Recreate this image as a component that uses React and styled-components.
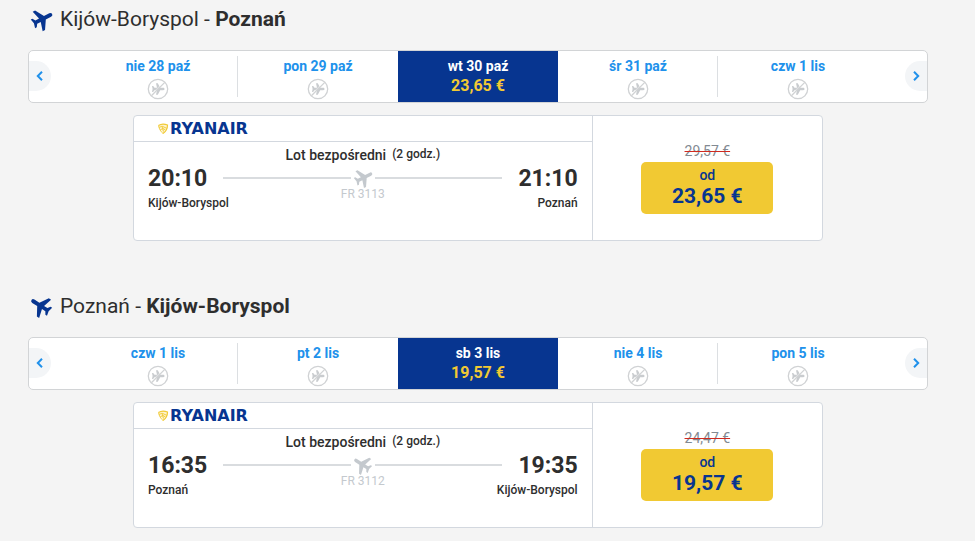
import React from 'react';
import styled, { createGlobalStyle } from 'styled-components';

const navy = '#073590';
const yellow = '#f1c933';
const sky = '#2091eb';
const ink = '#2e2e2e';
const line = '#d3d8df';
const silver = '#c4c9ce';

const GlobalStyle = createGlobalStyle`
  * { box-sizing: border-box; }
  body {
    margin: 0;
    background: #f4f4f4;
    color: ${ink};
    font-family: Roboto, "Liberation Sans", sans-serif;
  }
  button { font-family: inherit; cursor: pointer; }
`;

const Page = styled.main`
  max-width: 975px;
  padding: 4px 47px 13px 28px;
  display: flex;
  flex-direction: column;
  gap: 50px;
`;

const Trip = styled.section`
  display: flex;
  flex-direction: column;
`;

const Heading = styled.h2`
  display: flex;
  align-items: center;
  gap: 8px;
  margin: 0 0 16px;
  padding-left: 3px;
  font-size: 21px;
  line-height: 30px;
  font-weight: 400;
`;

const Strong = styled.strong`
  font-weight: 700;
`;

const Carousel = styled.nav`
  display: grid;
  grid-template-columns: 49px 1fr 49px;
  height: 53px;
  background: #fff;
  border: 1px solid #d2d4d6;
  border-radius: 5px;
`;

const Arrow = styled.button`
  display: flex;
  align-items: center;
  justify-content: center;
  width: 22px;
  height: 30px;
  margin-top: 10px;
  padding: 0;
  border: 0;
  background: #f3f5f7;
  color: ${sky};
  justify-self: ${(p) => (p.$next ? 'end' : 'start')};
  border-radius: ${(p) => (p.$next ? '15px 0 0 15px' : '0 15px 15px 0')};
`;

const Days = styled.div`
  display: grid;
  grid-template-columns: repeat(5, 1fr);
  height: 100%;
`;

const Day = styled.button`
  display: flex;
  flex-direction: column;
  align-items: center;
  justify-content: flex-start;
  gap: ${(p) => (p.$selected ? '2px' : '4px')};
  padding: 7px 0 0;
  border: 0;
  background: ${(p) => {
    if (p.$selected) return navy;
    return p.$divided
      ? 'linear-gradient(#dcdfe2, #dcdfe2) right center / 1px 41px no-repeat'
      : 'transparent';
  }};
  color: ${(p) => (p.$selected ? '#fff' : sky)};
  font-size: 14px;
  line-height: 16px;
  font-weight: 700;
`;

const DayPrice = styled.span`
  color: ${yellow};
  font-size: 16px;
  line-height: 20px;
`;

const Card = styled.article`
  display: grid;
  grid-template-columns: 2fr 1fr;
  width: calc(100% - 210px);
  min-height: 126px;
  margin: 12px auto 0;
  background: #fff;
  border: 1px solid ${line};
  border-radius: 4px;
`;

const Details = styled.div`
  border-right: 1px solid ${line};
`;

const Carrier = styled.div`
  display: flex;
  align-items: center;
  height: 26px;
  padding-left: 23px;
  border-bottom: 1px solid ${line};
`;

const Brand = styled.span`
  color: ${navy};
  font-family: "DejaVu Sans", sans-serif;
  font-size: 16px;
  line-height: 20px;
  font-weight: 700;
`;

const Summary = styled.div`
  display: flex;
  justify-content: center;
  gap: 6px;
  padding-top: 4px;
  font-size: 14px;
  line-height: 18px;
  font-weight: 500;
`;

const Duration = styled.span`
  font-size: 12px;
  line-height: 16px;
`;

const Route = styled.div`
  display: grid;
  grid-template-columns: 1fr 279px 1fr;
  padding: 0 14px;
`;

const Stop = styled.div`
  display: flex;
  flex-direction: column;
  align-items: ${(p) => (p.$end ? 'flex-end' : 'flex-start')};
  white-space: nowrap;
  min-width: 0;
`;

const Time = styled.time`
  font-size: 23px;
  line-height: 30px;
  font-weight: 700;
`;

const City = styled.span`
  font-size: 12px;
  line-height: 18px;
  font-weight: 500;
`;

const Path = styled.div`
  display: flex;
  flex-direction: column;
  align-items: center;
  padding-top: 5px;
`;

const Track = styled.div`
  display: flex;
  align-items: center;
  align-self: stretch;
  gap: 3px;

  &::before,
  &::after {
    content: '';
    flex: 1;
    height: 2px;
    background: #d9dcdf;
  }
`;

const FlightNumber = styled.span`
  color: ${silver};
  font-size: 12px;
  line-height: 14px;
`;

const Offer = styled.div`
  display: flex;
  flex-direction: column;
  align-items: center;
  padding-top: 26px;
`;

const OldPrice = styled.s`
  color: #828a92;
  font-size: 14px;
  line-height: 18px;
  text-decoration-color: #d02a20;
`;

const BuyButton = styled.button`
  display: flex;
  flex-direction: column;
  align-items: center;
  width: 132px;
  height: 52px;
  margin-top: 2px;
  padding: 4px 0 0;
  border: 0;
  border-radius: 5px;
  background: ${yellow};
  color: ${navy};
  font-size: 14px;
  line-height: 18px;
  font-weight: 500;
`;

const Amount = styled.span`
  font-size: 21px;
  line-height: 24px;
  font-weight: 700;
`;

const PLANE =
  'M9.9 9.5V3.3a2.1 2.3 0 0 1 4.2 0V9.5L23.5 15.2v2.8L14 15.4v4.2l3 2v2L12 22.4 7 23.6v-2l3-2v-4.2L.5 18v-2.8z';

function Plane({ back, color, size }) {
  return (
    <svg width={size} height={size} viewBox="1 1 22 22" overflow="visible" aria-hidden="true">
      <path d={PLANE} fill={color} transform={`rotate(${back ? -57 : 63} 12 12) translate(0 -1.5)`} />
    </svg>
  );
}

function NoFlight() {
  return (
    <svg width="22" height="22" viewBox="0 0 22 22" role="img" aria-label="Brak lotu">
      <circle cx="11" cy="11" r="9.7" fill="none" stroke="#d0d2d4" strokeWidth="1.3" />
      <path
        d="M17.5 11c0 .8-.6 1.2-1.3 1.2h-3l-2.4 4.6H9L10 12.200H7.500L6.200 14H5l.6-3L5 8h1.200l1.300 1.800H10L9 5.200h1.800l2.400 4.600h3c.7 0 1.300.4 1.300 1.200z"
        fill="#c9cccf"
      />
      <path d="M4.2 16.6 16.6 4.2" stroke="#fff" strokeWidth=".6" />
      <path d="M4.4 17.8 17.8 4.4" stroke="#d0d2d4" strokeWidth="1.3" />
    </svg>
  );
}

function Chevron({ next }) {
  return (
    <svg width="8" height="10" viewBox="0 0 8 10" aria-hidden="true">
      <path d={next ? 'M2 .8 6.2 5 2 9.2' : 'M6 .8 1.8 5 6 9.2'} fill="none" stroke="currentColor" strokeWidth="2" />
    </svg>
  );
}

function Harp() {
  return (
    <svg width="13" height="12" viewBox="0 0 13 12" aria-hidden="true">
      <path d="M1.5 2.5C4 .8 7.5.8 10.5 2c0 3.5-1.500 6.500-4.500 8.500" fill="#fdf3cf" stroke={yellow} strokeWidth="1.2" />
      <path d="M1.5 2.5c.5 3 2 6 4.5 8M2 4.500l3-1.300 4.500 2M3.200 6.800l2.800-1.300 2.500 1.500M5.200 4l1.300 4.500" fill="none" stroke={yellow} strokeWidth=".9" />
    </svg>
  );
}

const trips = [
  {
    from: 'Kijów-Boryspol', to: 'Poznań', back: false,
    days: ['nie 28 paź', 'pon 29 paź', 'wt 30 paź', 'śr 31 paź', 'czw 1 lis'],
    depart: '20:10', arrive: '21:10', number: 'FR 3113', old: '29,57 €', price: '23,65 €',
  },
  {
    from: 'Poznań', to: 'Kijów-Boryspol', back: true,
    days: ['czw 1 lis', 'pt 2 lis', 'sb 3 lis', 'nie 4 lis', 'pon 5 lis'],
    depart: '16:35', arrive: '19:35', number: 'FR 3112', old: '24,47 €', price: '19,57 €',
  },
];

function TripSection({ trip }) {
  return (
    <Trip>
      <Heading>
        <Plane back={trip.back} color={navy} size={21} />
        <span>{trip.from} - <Strong>{trip.to}</Strong></span>
      </Heading>
      <Carousel aria-label={`${trip.from} - ${trip.to}`}>
        <Arrow aria-label="Poprzednie dni"><Chevron /></Arrow>
        <Days>
          {trip.days.map((day, i) => (
            <Day key={day} $selected={i === 2} $divided={i === 0 || i === 3}>
              {day}
              {i === 2 ? <DayPrice>{trip.price}</DayPrice> : <NoFlight />}
            </Day>
          ))}
        </Days>
        <Arrow $next aria-label="Następne dni"><Chevron next /></Arrow>
      </Carousel>
      <Card>
        <Details>
          <Carrier><Harp /><Brand>RYANAIR</Brand></Carrier>
          <Summary>Lot bezpośredni <Duration>(2 godz.)</Duration></Summary>
          <Route>
            <Stop><Time>{trip.depart}</Time><City>{trip.from}</City></Stop>
            <Path>
              <Track><Plane back={trip.back} color={silver} size={18} /></Track>
              <FlightNumber>{trip.number}</FlightNumber>
            </Path>
            <Stop $end><Time>{trip.arrive}</Time><City>{trip.to}</City></Stop>
          </Route>
        </Details>
        <Offer>
          <OldPrice>{trip.old}</OldPrice>
          <BuyButton>od<Amount>{trip.price}</Amount></BuyButton>
        </Offer>
      </Card>
    </Trip>
  );
}

export default function App() {
  return (
    <>
      <GlobalStyle />
      <Page>
        {trips.map((trip) => <TripSection key={trip.number} trip={trip} />)}
      </Page>
    </>
  );
}
